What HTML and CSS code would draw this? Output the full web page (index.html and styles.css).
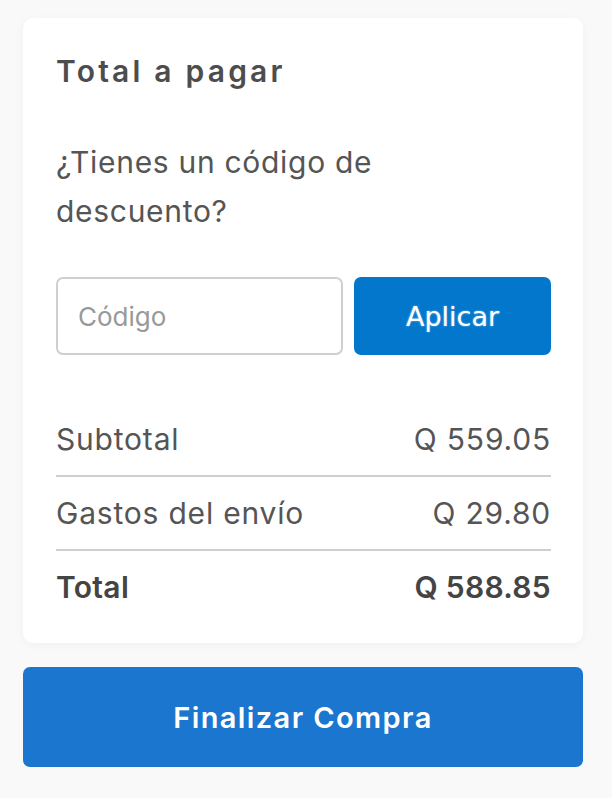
FILE: index.html
```html
<!DOCTYPE html>
<html lang="es">
<head>
<meta charset="utf-8">
<link rel="stylesheet" href="styles.css">
</head>
<body>
<div class="page">
  <section class="card">
    <h2 class="title">Total a pagar</h2>
    <p class="question">¿Tienes un código de<br>descuento?</p>
    <div class="coupon">
      <input class="coupon-input" type="text" placeholder="Código">
      <button class="coupon-btn" type="button">Aplicar</button>
    </div>
    <div class="rows">
      <div class="row"><span>Subtotal</span><span>Q 559.05</span></div>
      <div class="row"><span>Gastos del envío</span><span>Q 29.80</span></div>
      <div class="row row-total"><span>Total</span><span>Q 588.85</span></div>
    </div>
  </section>
  <button class="checkout" type="button">Finalizar Compra</button>
</div>
</body>
</html>
```

FILE: styles.css
```css
html, body {
  margin: 0;
  padding: 0;
  background: #f9f9f9;
}
body {
  font-family: Inter, "Open Sans", sans-serif;
  color: #555;
}
.page {
  padding: 18px 29px 30px 23px;
  display: flex;
  flex-direction: column;
  gap: 24px;
}
.card {
  background: #fff;
  border-radius: 10px;
  padding: 35px 32px 20px 33px;
  box-shadow: 0 2px 10px rgba(0,0,0,0.04);
}
.title {
  margin: 0;
  font-size: 30px;
  font-weight: 600;
  letter-spacing: 3.2px;
  color: #4d4d4d;
  line-height: 36px;
}
.question {
  margin: 49px 0 0 0;
  font-size: 30px;
  font-weight: 400;
  line-height: 49px;
  letter-spacing: 0.7px;
  color: #555;
}
.coupon {
  margin-top: 41px;
  display: flex;
  gap: 11px;
}
.coupon-input {
  box-sizing: border-box;
  width: 287px;
  height: 78px;
  border: 2px solid #cfcfcf;
  border-radius: 7px;
  padding: 0 20px;
  font-family: Inter, sans-serif;
  font-size: 26px;
  color: #333;
  background: #fff;
  outline: none;
}
.coupon-input::placeholder {
  color: #999;
}
.coupon-btn {
  flex: 1;
  height: 78px;
  border: none;
  border-radius: 7px;
  background: #0277cc;
  color: #fff;
  font-family: "DejaVu Sans", sans-serif;
  font-size: 27px;
  padding: 0;
  text-shadow: 0 0 2px rgba(255,255,255,0.6);
}
.rows {
  margin-top: 48px;
  display: flex;
  flex-direction: column;
}
.row {
  display: flex;
  justify-content: space-between;
  align-items: center;
  height: 72px;
  border-bottom: 2px solid #cfcfcf;
  font-size: 30px;
  letter-spacing: 0.8px;
  color: #555;
}
.row-total {
  border-bottom: none;
  font-weight: 600;
  letter-spacing: 0.3px;
  color: #444;
}
.checkout {
  height: 100px;
  border: none;
  border-radius: 7px;
  background: #1b76cf;
  color: #fff;
  font-family: Inter, sans-serif;
  font-size: 29px;
  font-weight: 600;
  letter-spacing: 1.4px;
}
```
